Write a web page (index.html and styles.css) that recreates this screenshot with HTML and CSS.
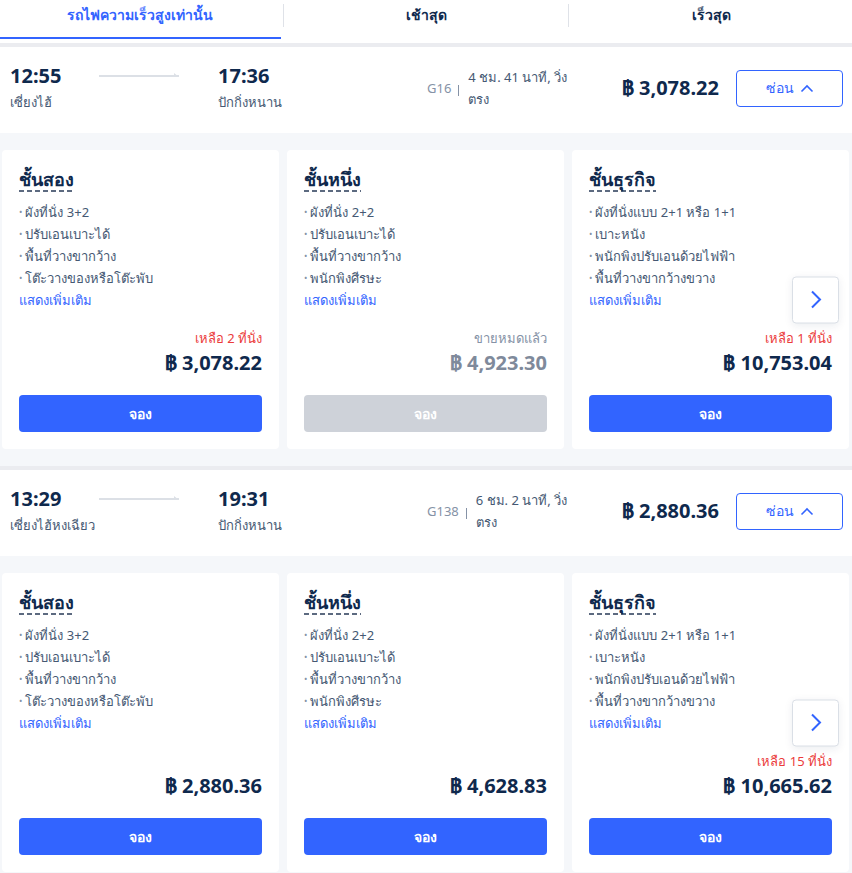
FILE: index.html
```html
<!DOCTYPE html>
<html lang="th">
<head>
  <meta charset="UTF-8">
  <meta name="viewport" content="width=device-width, initial-scale=1">
  <title>รถไฟ</title>
  <link rel="stylesheet" href="styles.css">
</head>
<body>
  <div class="tabs">
    <div class="tab active">รถไฟความเร็วสูงเท่านั้น</div>
    <span class="tab-sep"></span>
    <div class="tab">เช้าสุด</div>
    <span class="tab-sep"></span>
    <div class="tab">เร็วสุด</div>
  </div>

  <!-- train 1 -->
  <div class="train">
    <div class="train-row">
      <div class="stop">
        <div class="time">12:55</div>
        <div class="station">เซี่ยงไฮ้</div>
      </div>
      <div class="line-arrow"></div>
      <div class="stop stop-arr">
        <div class="time">17:36</div>
        <div class="station">ปักกิ่งหนาน</div>
      </div>
      <div class="train-no">G16</div>
      <div class="pipe"></div>
      <div class="duration">4 ชม. 41 นาที, วิ่ง<br>ตรง</div>
      <div class="row-price">฿ 3,078.22</div>
      <button class="hide-btn">ซ่อน
        <svg width="14" height="9" viewBox="0 0 14 9"><path d="M1.5 7.5 L7 2 L12.5 7.5" fill="none" stroke="#3264ff" stroke-width="1.6"/></svg>
      </button>
    </div>
    <div class="seats">
      <div class="seat-card">
        <div class="seat-title">ชั้นสอง</div>
        <ul class="features">
          <li>ผังที่นั่ง 3+2</li>
          <li>ปรับเอนเบาะได้</li>
          <li>พื้นที่วางขากว้าง</li>
          <li>โต๊ะวางของหรือโต๊ะพับ</li>
        </ul>
        <div class="more">แสดงเพิ่มเติม</div>
        <div class="notice">เหลือ 2 ที่นั่ง</div>
        <div class="seat-price">฿ 3,078.22</div>
        <button class="book">จอง</button>
      </div>
      <div class="seat-card">
        <div class="seat-title">ชั้นหนึ่ง</div>
        <ul class="features">
          <li>ผังที่นั่ง 2+2</li>
          <li>ปรับเอนเบาะได้</li>
          <li>พื้นที่วางขากว้าง</li>
          <li>พนักพิงศีรษะ</li>
        </ul>
        <div class="more">แสดงเพิ่มเติม</div>
        <div class="notice sold">ขายหมดแล้ว</div>
        <div class="seat-price sold">฿ 4,923.30</div>
        <button class="book disabled">จอง</button>
      </div>
      <div class="seat-card">
        <div class="seat-title">ชั้นธุรกิจ</div>
        <ul class="features">
          <li>ผังที่นั่งแบบ 2+1 หรือ 1+1</li>
          <li>เบาะหนัง</li>
          <li>พนักพิงปรับเอนด้วยไฟฟ้า</li>
          <li>พื้นที่วางขากว้างขวาง</li>
        </ul>
        <div class="more">แสดงเพิ่มเติม</div>
        <div class="notice">เหลือ 1 ที่นั่ง</div>
        <div class="seat-price">฿ 10,753.04</div>
        <button class="book">จอง</button>
      </div>
      <div class="next-btn">
        <svg width="12" height="20" viewBox="0 0 12 20"><path d="M2 2 L10 10 L2 18" fill="none" stroke="#3264ff" stroke-width="2"/></svg>
      </div>
    </div>
  </div>

  <!-- train 2 -->
  <div class="train">
    <div class="train-row">
      <div class="stop">
        <div class="time">13:29</div>
        <div class="station">เซี่ยงไฮ้หงเฉียว</div>
      </div>
      <div class="line-arrow"></div>
      <div class="stop stop-arr">
        <div class="time">19:31</div>
        <div class="station">ปักกิ่งหนาน</div>
      </div>
      <div class="train-no">G138</div>
      <div class="pipe"></div>
      <div class="duration">6 ชม. 2 นาที, วิ่ง<br>ตรง</div>
      <div class="row-price">฿ 2,880.36</div>
      <button class="hide-btn">ซ่อน
        <svg width="14" height="9" viewBox="0 0 14 9"><path d="M1.5 7.5 L7 2 L12.5 7.5" fill="none" stroke="#3264ff" stroke-width="1.6"/></svg>
      </button>
    </div>
    <div class="seats">
      <div class="seat-card">
        <div class="seat-title">ชั้นสอง</div>
        <ul class="features">
          <li>ผังที่นั่ง 3+2</li>
          <li>ปรับเอนเบาะได้</li>
          <li>พื้นที่วางขากว้าง</li>
          <li>โต๊ะวางของหรือโต๊ะพับ</li>
        </ul>
        <div class="more">แสดงเพิ่มเติม</div>
        <div class="notice"></div>
        <div class="seat-price">฿ 2,880.36</div>
        <button class="book">จอง</button>
      </div>
      <div class="seat-card">
        <div class="seat-title">ชั้นหนึ่ง</div>
        <ul class="features">
          <li>ผังที่นั่ง 2+2</li>
          <li>ปรับเอนเบาะได้</li>
          <li>พื้นที่วางขากว้าง</li>
          <li>พนักพิงศีรษะ</li>
        </ul>
        <div class="more">แสดงเพิ่มเติม</div>
        <div class="notice"></div>
        <div class="seat-price">฿ 4,628.83</div>
        <button class="book">จอง</button>
      </div>
      <div class="seat-card">
        <div class="seat-title">ชั้นธุรกิจ</div>
        <ul class="features">
          <li>ผังที่นั่งแบบ 2+1 หรือ 1+1</li>
          <li>เบาะหนัง</li>
          <li>พนักพิงปรับเอนด้วยไฟฟ้า</li>
          <li>พื้นที่วางขากว้างขวาง</li>
        </ul>
        <div class="more">แสดงเพิ่มเติม</div>
        <div class="notice">เหลือ 15 ที่นั่ง</div>
        <div class="seat-price">฿ 10,665.62</div>
        <button class="book">จอง</button>
      </div>
      <div class="next-btn">
        <svg width="12" height="20" viewBox="0 0 12 20"><path d="M2 2 L10 10 L2 18" fill="none" stroke="#3264ff" stroke-width="2"/></svg>
      </div>
    </div>
  </div>
</body>
</html>
```

FILE: styles.css
```css
body {
  margin: 0;
  background: #f5f7fa;
  color: #0f294d;
  font-family: "Noto Sans", "Liberation Sans", sans-serif;
  font-size: 14px;
}

/* top tabs */
.tabs {
  display: flex;
  align-items: flex-start;
  height: 43px;
  background: #fff;
}
.tab {
  flex: 1;
  height: 39px;
  box-sizing: border-box;
  padding-top: 5px;
  line-height: 20px;
  text-align: center;
  font-weight: 700;
  font-size: 14px;
  color: #0f294d;
}
.tab.active {
  color: #3264ff;
  border-bottom: 2px solid #3264ff;
}
.tab-sep {
  width: 1px;
  height: 23px;
  margin: 4px 2px 0;
  background: #dfe2e8;
}

/* one train block */
.train {
  border-top: 4px solid #ebecf0;
}
.train-row {
  display: flex;
  align-items: center;
  box-sizing: border-box;
  height: 86px;
  padding: 0 9px 4px 10px;
  background: #fff;
}
.stop {
  width: 89px;
}
.stop-arr {
  width: 209px;
}
.time {
  font-size: 20px;
  font-weight: 700;
  line-height: 24px;
}
.station {
  font-size: 13px;
  line-height: 22px;
  margin-top: 3px;
  color: #455873;
  white-space: nowrap;
}
.line-arrow {
  position: relative;
  width: 80px;
  height: 2px;
  margin: 0 39px 0 0;
  background: #dce0e6;
  transform: translateY(-12px);
}
.line-arrow::after {
  content: "";
  position: absolute;
  right: 0;
  bottom: 0;
  border-left: 5px solid #dce0e6;
  border-top: 4px solid transparent;
}
.train-no {
  font-size: 13px;
  color: #8592a6;
}
.pipe {
  width: 1px;
  height: 11px;
  margin: 4px 9px 0 7px;
  background: #8592a6;
}
.duration {
  font-size: 13px;
  line-height: 22px;
  color: #455873;
  white-space: nowrap;
}
.row-price {
  flex: 1;
  text-align: right;
  font-size: 20px;
  font-weight: 700;
}
.hide-btn {
  margin-left: 17px;
  width: 107px;
  height: 37px;
  border: 1px solid #3264ff;
  border-radius: 4px;
  background: #fff;
  color: #3264ff;
  font-family: inherit;
  font-size: 14px;
  display: flex;
  align-items: center;
  justify-content: center;
  gap: 6px;
}

/* seat class cards */
.seats {
  position: relative;
  display: flex;
  gap: 8px;
  padding: 17px 3px 17px 2px;
}
.seat-card {
  flex: 1;
  background: #fff;
  border-radius: 4px;
  padding: 18px 17px 17px;
  display: flex;
  flex-direction: column;
}
.seat-title {
  align-self: flex-start;
  font-size: 18px;
  font-weight: 700;
  line-height: 22px;
  padding-bottom: 2px;
  background: linear-gradient(to right, #5c6a80 60%, transparent 0) left bottom / 8px 2px repeat-x;
}
.features {
  list-style: none;
  margin: 9px 0 0;
  padding: 0;
  font-size: 13px;
  line-height: 22px;
  color: #455873;
}
.features li::before {
  content: "•";
  font-size: 9px;
  color: #8592a6;
  margin-right: 3px;
  vertical-align: 2px;
}
.more {
  font-size: 13px;
  line-height: 22px;
  color: #3264ff;
}
.notice {
  margin-top: 17px;
  height: 20px;
  line-height: 20px;
  text-align: right;
  font-size: 13px;
  color: #eb3b3b;
}
.notice.sold {
  color: #8592a6;
}
.seat-price {
  margin-top: 1px;
  text-align: right;
  font-size: 20px;
  font-weight: 700;
  line-height: 28px;
}
.seat-price.sold {
  color: #7f8a9b;
}
.book {
  margin-top: 18px;
  height: 37px;
  border: none;
  border-radius: 4px;
  background: #3264ff;
  color: #fff;
  font-family: inherit;
  font-size: 14px;
  font-weight: 700;
}
.book.disabled {
  background: #ced2d9;
}
.next-btn {
  position: absolute;
  right: 13px;
  top: 50%;
  transform: translateY(-50%);
  width: 45px;
  height: 45px;
  border: 1px solid #dadfe6;
  border-radius: 4px;
  background: #fff;
  box-shadow: 0 2px 8px rgba(15, 41, 77, 0.08);
  display: flex;
  align-items: center;
  justify-content: center;
}
```
